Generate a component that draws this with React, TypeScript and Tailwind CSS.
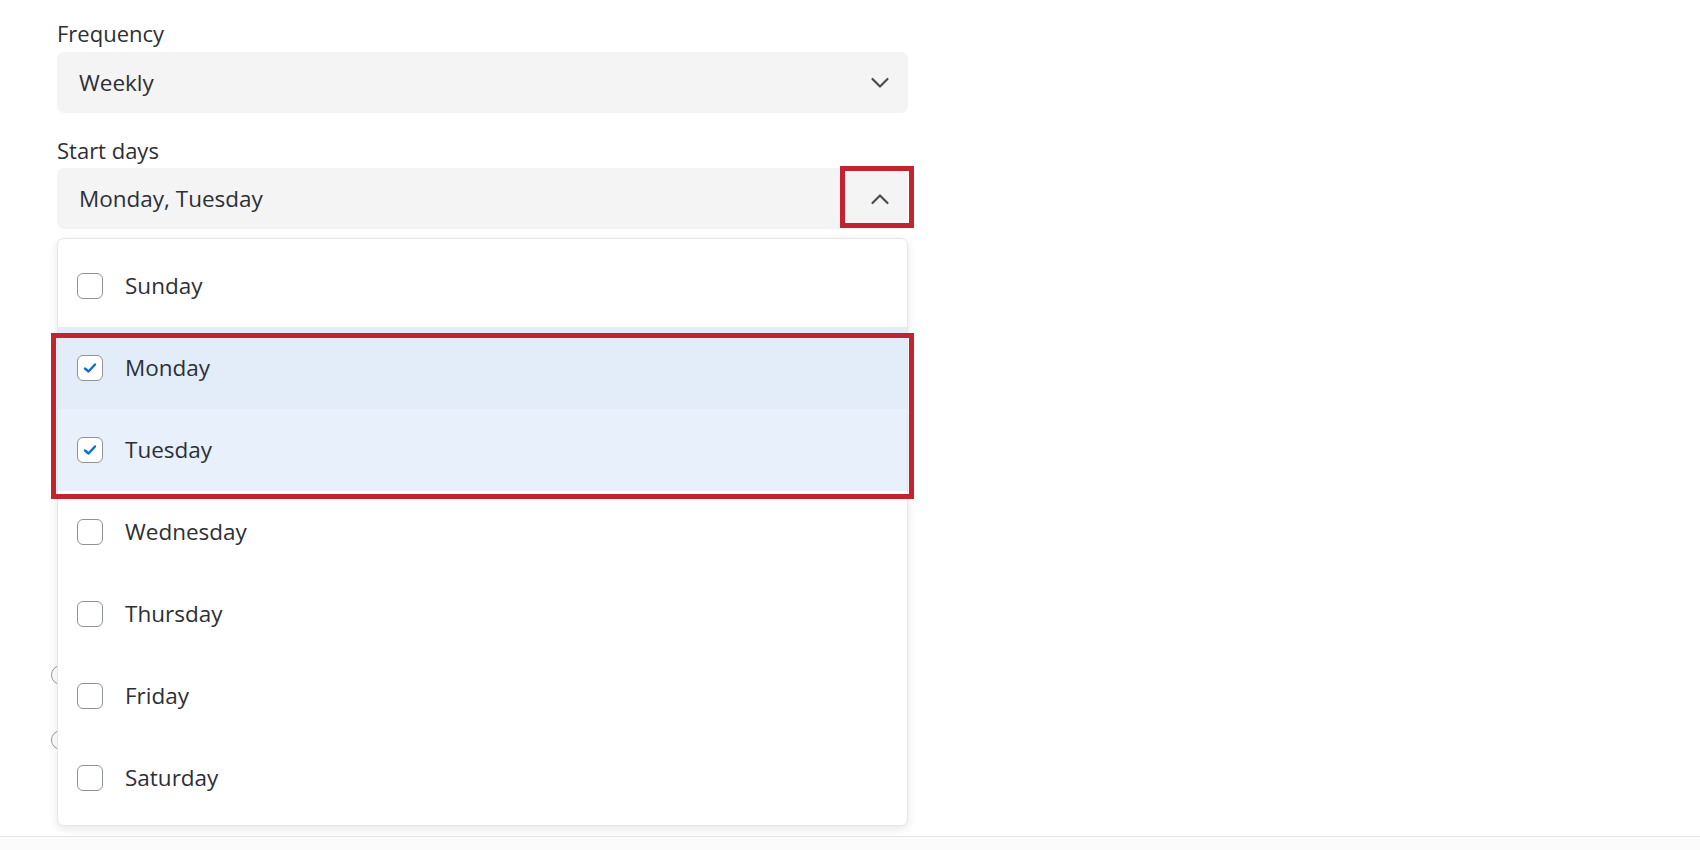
import React from "react";

const days = [
  { name: "Sunday", checked: false },
  { name: "Monday", checked: true },
  { name: "Tuesday", checked: true },
  { name: "Wednesday", checked: false },
  { name: "Thursday", checked: false },
  { name: "Friday", checked: false },
  { name: "Saturday", checked: false },
];

function Chevron({ up }: { up?: boolean }) {
  return (
    <svg width="20" height="12" viewBox="0 0 20 12" fill="none" className="shrink-0">
      {up ? (
        <path d="M2.5 10 L10 2.5 L17.5 10" stroke="#4a4d50" strokeWidth="2.2" strokeLinecap="round" strokeLinejoin="round" />
      ) : (
        <path d="M2.5 2 L10 9.5 L17.5 2" stroke="#4a4d50" strokeWidth="2.2" strokeLinecap="round" strokeLinejoin="round" />
      )}
    </svg>
  );
}

function Checkbox({ checked }: { checked: boolean }) {
  return (
    <div className="w-[26px] h-[26px] rounded-[6px] border-[1.5px] border-[#8f9296] bg-white flex items-center justify-center shrink-0">
      {checked && (
        <svg width="14" height="12" viewBox="0 0 14 12" fill="none">
          <path d="M2 6.5 L5.5 9.5 L12 2.5" stroke="#0b6fd2" strokeWidth="2.4" strokeLinecap="round" strokeLinejoin="round" />
        </svg>
      )}
    </div>
  );
}

export default function App() {
  return (
    <div
      className="w-[1700px] h-[850px] bg-white relative overflow-hidden text-[#2d3034]"
      style={{ fontFamily: '"Open Sans", "Noto Sans", sans-serif' }}
    >
      <div className="flex flex-col pl-[57px] pt-[18px] h-[837px] border-b border-[#e6e6e6]">
        <div className="text-[22px] leading-[30px] mb-[4px]">Frequency</div>
        <div className="w-[851px] h-[61px] bg-[#f4f4f4] rounded-[7px] flex items-center justify-between pl-[22px] pr-[18px]">
          <span className="text-[22.5px]">Weekly</span>
          <Chevron />
        </div>
        <div className="text-[22px] leading-[30px] mt-[22px] mb-[3px]">Start days</div>
        <div className="w-[851px] h-[61px] bg-[#f4f4f4] rounded-[7px] flex items-center justify-between pl-[22px] pr-[18px]">
          <span className="text-[22.5px]">Monday, Tuesday</span>
          <Chevron up />
        </div>
        <div className="flex flex-col gap-[45px] mt-[436px] -ml-[6px]">
          <div className="w-[20px] h-[20px] rounded-full border border-[#9a9a9a]" />
          <div className="w-[20px] h-[20px] rounded-full border border-[#9a9a9a]" />
        </div>
      </div>
      <div className="h-[13px] bg-[#fbfbfb]" />

      {/* dropdown menu */}
      <div className="absolute left-[57px] top-[238px] w-[851px] bg-white rounded-[7px] border border-[#e6e6e6] shadow-[0_3px_10px_rgba(0,0,0,0.10)] py-[6px]">
        {days.map((d, i) => (
          <div
            key={d.name}
            className={
              "h-[82px] flex items-center pl-[19px] gap-[22px] " +
              (i === 1 ? "bg-[#e3edf9]" : i === 2 ? "bg-[#e8f1fb]" : "bg-white")
            }
          >
            <Checkbox checked={d.checked} />
            <span className="text-[22.5px]">{d.name}</span>
          </div>
        ))}
      </div>

      {/* annotation highlights */}
      <div className="absolute left-[840px] top-[166px] w-[74px] h-[62px] border-[5px] border-[#c1232f]" />
      <div className="absolute left-[51px] top-[333px] w-[863px] h-[166px] border-[5px] border-[#c1232f]" />
    </div>
  );
}
